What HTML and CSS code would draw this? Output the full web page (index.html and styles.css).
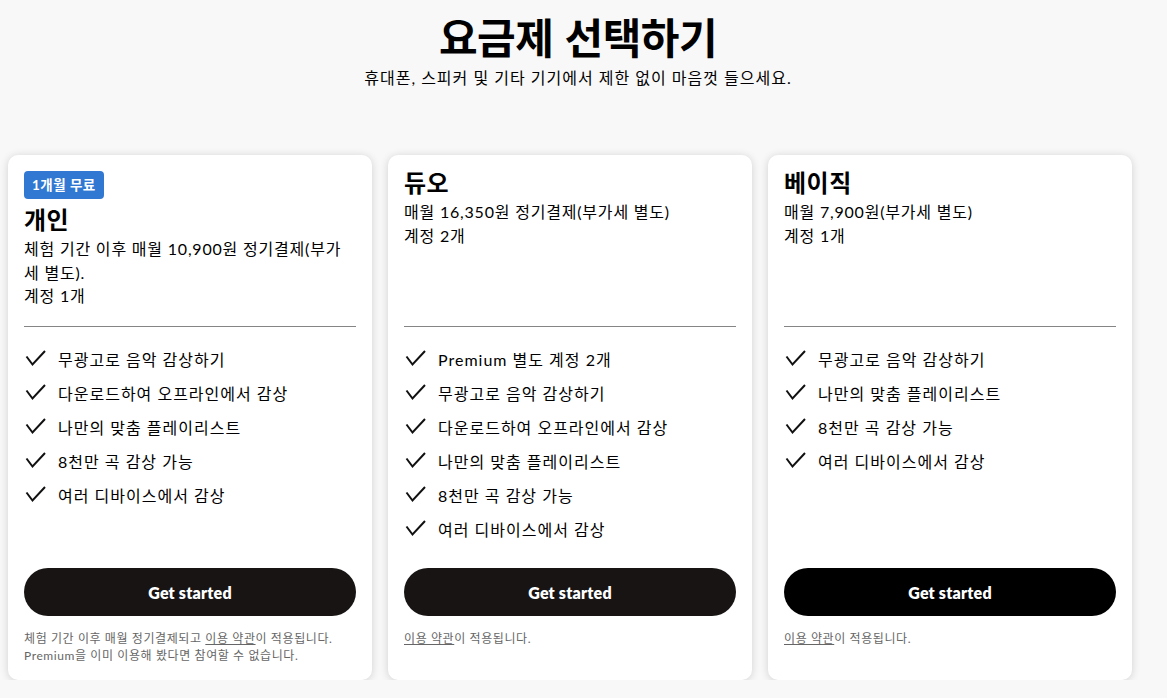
FILE: index.html
```html
<!DOCTYPE html>
<html lang="ko">
<head>
<meta charset="utf-8">
<title>요금제 선택하기</title>
<link rel="stylesheet" href="styles.css">
</head>
<body>
<header class="intro">
  <h1 class="intro-title">요금제 선택하기</h1>
  <p class="intro-sub">휴대폰, 스피커 및 기타 기기에서 제한 없이 마음껏 들으세요.</p>
</header>
<main class="plans">
  <section class="card">
    <div class="card-head">
      <span class="badge">1개월 무료</span>
      <h2 class="plan-name plan-name-badged">개인</h2>
      <p class="plan-desc">체험 기간 이후 매월 10,900원 정기결제(부가세 별도).</p>
      <p class="plan-desc">계정 1개</p>
    </div>
    <ul class="features">
      <li class="feature"><svg class="check" viewBox="0 0 24 24"><polyline points="2.5,9.5 8.5,17.5 21,4"/></svg><span>무광고로 음악 감상하기</span></li>
      <li class="feature"><svg class="check" viewBox="0 0 24 24"><polyline points="2.5,9.5 8.5,17.5 21,4"/></svg><span>다운로드하여 오프라인에서 감상</span></li>
      <li class="feature"><svg class="check" viewBox="0 0 24 24"><polyline points="2.5,9.5 8.5,17.5 21,4"/></svg><span>나만의 맞춤 플레이리스트</span></li>
      <li class="feature"><svg class="check" viewBox="0 0 24 24"><polyline points="2.5,9.5 8.5,17.5 21,4"/></svg><span>8천만 곡 감상 가능</span></li>
      <li class="feature"><svg class="check" viewBox="0 0 24 24"><polyline points="2.5,9.5 8.5,17.5 21,4"/></svg><span>여러 디바이스에서 감상</span></li>
    </ul>
    <button class="cta">Get started</button>
    <p class="fine">체험 기간 이후 매월 정기결제되고 <a class="fine-link" href="#">이용 약관</a>이 적용됩니다.<br>Premium을 이미 이용해 봤다면 참여할 수 없습니다.</p>
  </section>

  <section class="card">
    <div class="card-head">
      <h2 class="plan-name">듀오</h2>
      <p class="plan-desc">매월 16,350원 정기결제(부가세 별도)</p>
      <p class="plan-desc">계정 2개</p>
    </div>
    <ul class="features">
      <li class="feature"><svg class="check" viewBox="0 0 24 24"><polyline points="2.5,9.5 8.5,17.5 21,4"/></svg><span>Premium 별도 계정 2개</span></li>
      <li class="feature"><svg class="check" viewBox="0 0 24 24"><polyline points="2.5,9.5 8.5,17.5 21,4"/></svg><span>무광고로 음악 감상하기</span></li>
      <li class="feature"><svg class="check" viewBox="0 0 24 24"><polyline points="2.5,9.5 8.5,17.5 21,4"/></svg><span>다운로드하여 오프라인에서 감상</span></li>
      <li class="feature"><svg class="check" viewBox="0 0 24 24"><polyline points="2.5,9.5 8.5,17.5 21,4"/></svg><span>나만의 맞춤 플레이리스트</span></li>
      <li class="feature"><svg class="check" viewBox="0 0 24 24"><polyline points="2.5,9.5 8.5,17.5 21,4"/></svg><span>8천만 곡 감상 가능</span></li>
      <li class="feature"><svg class="check" viewBox="0 0 24 24"><polyline points="2.5,9.5 8.5,17.5 21,4"/></svg><span>여러 디바이스에서 감상</span></li>
    </ul>
    <button class="cta">Get started</button>
    <p class="fine"><a class="fine-link" href="#">이용 약관</a>이 적용됩니다.</p>
  </section>

  <section class="card">
    <div class="card-head">
      <h2 class="plan-name">베이직</h2>
      <p class="plan-desc">매월 7,900원(부가세 별도)</p>
      <p class="plan-desc">계정 1개</p>
    </div>
    <ul class="features">
      <li class="feature"><svg class="check" viewBox="0 0 24 24"><polyline points="2.5,9.5 8.5,17.5 21,4"/></svg><span>무광고로 음악 감상하기</span></li>
      <li class="feature"><svg class="check" viewBox="0 0 24 24"><polyline points="2.5,9.5 8.5,17.5 21,4"/></svg><span>나만의 맞춤 플레이리스트</span></li>
      <li class="feature"><svg class="check" viewBox="0 0 24 24"><polyline points="2.5,9.5 8.5,17.5 21,4"/></svg><span>8천만 곡 감상 가능</span></li>
      <li class="feature"><svg class="check" viewBox="0 0 24 24"><polyline points="2.5,9.5 8.5,17.5 21,4"/></svg><span>여러 디바이스에서 감상</span></li>
    </ul>
    <button class="cta cta-black">Get started</button>
    <p class="fine"><a class="fine-link" href="#">이용 약관</a>이 적용됩니다.</p>
  </section>
</main>
</body>
</html>
```

FILE: styles.css
```css
* { box-sizing: border-box; }

html, body {
  margin: 0;
  padding: 0;
}

body {
  background: #f8f8f8;
  color: #000;
  font-family: "Lato", "Noto Sans CJK KR", sans-serif;
}

.intro {
  text-align: center;
  padding: 12px 11px 0 0;
}

.intro-title {
  margin: 0;
  font-family: "Noto Sans CJK KR", sans-serif;
  font-size: 42px;
  line-height: 48px;
  font-weight: 700;
  letter-spacing: -0.5px;
}

.intro-sub {
  margin: 8px 0 0;
  font-size: 16px;
  line-height: 20px;
  letter-spacing: 1px;
}

.plans {
  display: grid;
  grid-template-columns: repeat(3, 364px);
  gap: 16px;
  padding: 0 8px;
  margin-top: 67px;
}

.card {
  background: #fff;
  border-radius: 10px;
  box-shadow: 0 1px 8px rgba(0, 0, 0, 0.16);
  padding: 16px 16px 16px;
  display: flex;
  flex-direction: column;
}

.card-head {
  height: 156px;
  border-bottom: 1px solid #858585;
}

.badge {
  display: inline-block;
  background: #3178d2;
  color: #fff;
  font-weight: 700;
  font-size: 13.5px;
  letter-spacing: 0.5px;
  line-height: 28px;
  height: 28px;
  padding: 0 8px;
  border-radius: 4px;
}

.plan-name {
  margin: 0 0 7px;
  font-family: "Noto Sans CJK KR", sans-serif;
  font-size: 24px;
  line-height: 22px;
  font-weight: 700;
  letter-spacing: 0.5px;
}

.plan-name-badged {
  margin-top: 9px;
}

.plan-desc {
  margin: 0;
  font-size: 16px;
  line-height: 23.5px;
  letter-spacing: 0.8px;
}

.features {
  list-style: none;
  margin: 15px 0 22px;
  padding: 0;
}

.feature {
  display: flex;
  align-items: center;
  gap: 10px;
  height: 34px;
  font-size: 16px;
  letter-spacing: 1px;
}

.check {
  width: 24px;
  height: 24px;
  flex: none;
  fill: none;
  stroke: #111;
  stroke-width: 2;
}

.cta {
  margin-top: auto;
  height: 48px;
  border: 0;
  border-radius: 24px;
  background: #181414;
  color: #fff;
  font-family: "Lato", "Noto Sans CJK KR", sans-serif;
  font-size: 16px;
  font-weight: 800;
  letter-spacing: 0.2px;
  cursor: pointer;
}

.cta-black {
  background: #000;
}

.fine {
  margin: 14px 0 0;
  min-height: 34px;
  font-size: 12px;
  line-height: 17px;
  letter-spacing: 0.6px;
  color: #666;
}

.fine-link {
  color: #666;
  text-decoration: underline;
}
```
